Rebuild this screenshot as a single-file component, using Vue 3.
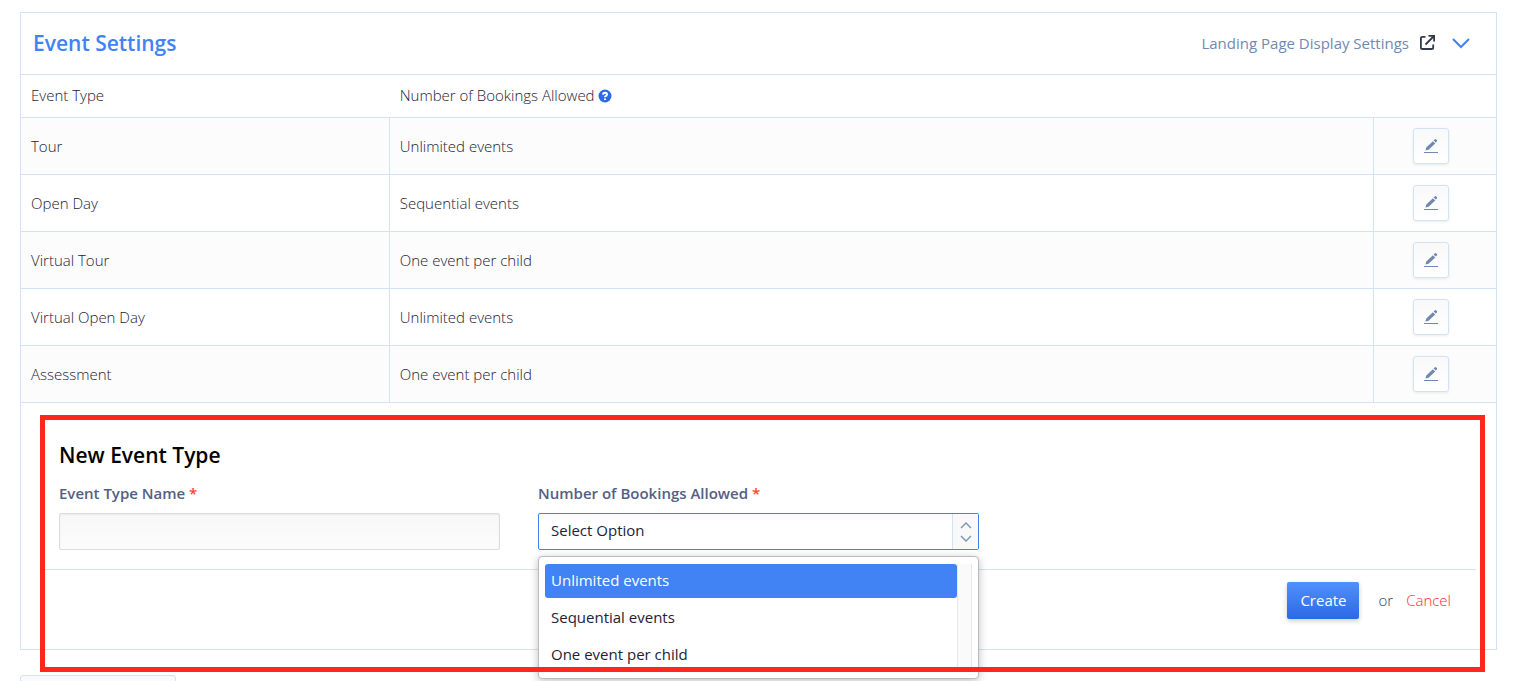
<script setup>
    import { ref } from 'vue'

    const eventTypes = ref([
        { id: 1, name: 'Tour', bookings: 'Unlimited events' },
        { id: 2, name: 'Open Day', bookings: 'Sequential events' },
        { id: 3, name: 'Virtual Tour', bookings: 'One event per child' },
        { id: 4, name: 'Virtual Open Day', bookings: 'Unlimited events' },
        { id: 5, name: 'Assessment', bookings: 'One event per child' },
    ])
    const bookingOptions = ['Unlimited events', 'Sequential events', 'One event per child']

    const typeName = ref('')
    const bookings = ref('')
    const activeOption = ref(0)
    const listOpen = ref(true)

    const pickOption = (option) => {
        bookings.value = option
        listOpen.value = false
    }

    const toggleList = () => {
        listOpen.value = !listOpen.value
    }

    const createType = () => {
        if (!typeName.value || !bookings.value) {
            return
        }
        eventTypes.value.push({
            id: eventTypes.value.length + 1,
            name: typeName.value,
            bookings: bookings.value,
        })
        resetForm()
    }

    const resetForm = () => {
        typeName.value = ''
        bookings.value = ''
    }
</script>

<template>
    <main class="page">
        <section class="panel">
            <header class="panel-header">
                <h2 class="panel-title">Event Settings</h2>
                <a class="landing-link" href="#">
                    Landing Page Display Settings
                    <svg class="icon-external" viewBox="0 0 15 15" aria-hidden="true">
                        <path d="M5.5 1.8H2.5Q0.9 1.8 0.9 3.4V12.4Q0.9 14 2.5 14H11.6Q13.2 14 13.2 12.4V9.5" />
                        <path d="M5.5 9.5L13.5 1.5M8.5 0.9H14.1V6.5" />
                    </svg>
                </a>
                <button class="collapse" type="button" aria-label="Collapse">
                    <svg viewBox="0 0 18 12" aria-hidden="true">
                        <path d="M1 2L9 10L17 2" />
                    </svg>
                </button>
            </header>

            <table class="types">
                <thead>
                    <tr>
                        <th class="col-name">Event Type</th>
                        <th>
                            Number of Bookings Allowed
                            <svg class="icon-help" viewBox="0 0 14 14" aria-hidden="true">
                                <circle cx="7" cy="7" r="6.5" />
                                <path d="M5 5.6Q5.1 3.7 7 3.7Q9 3.7 9 5.4Q9 6.4 7.9 6.9Q7 7.3 7 8.3" />
                                <path d="M7 9.6V11" />
                            </svg>
                        </th>
                        <th class="col-action"></th>
                    </tr>
                </thead>
                <tbody>
                    <tr v-for="type in eventTypes" :key="type.id">
                        <td>{{ type.name }}</td>
                        <td>{{ type.bookings }}</td>
                        <td class="col-action">
                            <button class="edit" type="button" :aria-label="'Edit ' + type.name">
                                <svg viewBox="0 0 14 16" aria-hidden="true">
                                    <path class="pencil" d="M1.4 12.6L2.3 9.4L8.9 3.2L11.2 5.4L4.6 11.7ZM9.6 2.5L10.9 1.3Q11.6 0.8 12.3 1.4L12.9 2Q13.5 2.7 12.9 3.4L11.8 4.6Z" />
                                    <path class="line" d="M0 14.5H14" />
                                </svg>
                            </button>
                        </td>
                    </tr>
                </tbody>
            </table>

            <form class="new-type" @submit.prevent="createType">
                <h3 class="form-title">New Event Type</h3>
                <div class="fields">
                    <div class="field">
                        <label for="type-name">Event Type Name <span class="required">*</span></label>
                        <input id="type-name" class="text-input" type="text" v-model="typeName" />
                    </div>
                    <div class="field">
                        <label for="bookings">Number of Bookings Allowed <span class="required">*</span></label>
                        <div class="select-box">
                            <select id="bookings" v-model="bookings" @mousedown.prevent="toggleList">
                                <option value="">Select Option</option>
                                <option v-for="option in bookingOptions" :key="option" :value="option">{{ option }}</option>
                            </select>
                            <span class="arrows">
                                <svg viewBox="0 0 12 20" aria-hidden="true">
                                    <path d="M1 6L6 1L11 6M1 14L6 19L11 14" />
                                </svg>
                            </span>
                            <div v-if="listOpen" class="menu">
                                <ul class="menu-list" role="listbox">
                                    <li v-for="(option, index) in bookingOptions" :key="option" class="menu-item"
                                        :class="{ active: index === activeOption }" role="option"
                                        @mouseenter="activeOption = index" @click="pickOption(option)">{{ option }}</li>
                                </ul>
                                <div class="menu-track"></div>
                            </div>
                        </div>
                    </div>
                </div>
                <div class="actions">
                    <button class="create" type="submit">Create</button>
                    <span class="or">or</span>
                    <a class="cancel" href="#" @click.prevent="resetForm">Cancel</a>
                </div>
                <div class="highlight"></div>
            </form>
        </section>
        <button class="next-button" type="button" aria-label="Add"></button>
    </main>
</template>

<style>
    body {
        background: #fff;
    }
</style>

<style scoped>
    .page {
        box-sizing: border-box;
        height: 100vh;
        overflow: hidden;
        padding: 12px 17px 0 20px;
        font-family: "Open Sans", "Noto Sans", sans-serif;
        font-size: 15px;
        line-height: 20px;
        color: #1d2236;
    }

    .page * {
        box-sizing: border-box;
    }

    button,
    input,
    select {
        font-family: inherit;
        font-size: 15px;
    }

    svg {
        fill: none;
    }

    .panel {
        border: 1px solid #d3e2f5;
    }

    .panel-header {
        display: flex;
        align-items: center;
        height: 62px;
        padding: 0 26px 2px 12px;
        border-bottom: 1px solid #d3e2f5;
    }

    .panel-title {
        flex: 1;
        margin: 0;
        font-size: 21px;
        font-weight: 600;
        line-height: 28px;
        color: #4183f4;
    }

    .landing-link {
        display: flex;
        align-items: center;
        gap: 11px;
        color: #7189b0;
        text-decoration: none;
    }

    .icon-external {
        width: 15px;
        height: 15px;
        stroke: #333a4d;
        stroke-width: 1.8;
    }

    .collapse {
        display: flex;
        margin-left: 17px;
        padding: 0;
        border: 0;
        background: none;
    }

    .collapse svg {
        width: 18px;
        height: 12px;
        stroke: #4183f4;
        stroke-width: 2;
    }

    .types {
        width: 100%;
        border-collapse: separate;
        border-spacing: 0;
        table-layout: fixed;
    }

    .types th,
    .types td {
        padding: 0 10px;
        border-bottom: 1px solid #d3e2f5;
        text-align: left;
        font-weight: 300;
    }

    .types th {
        height: 43px;
        padding-bottom: 3px;
    }

    .types td {
        height: 57px;
        border-right: 1px solid #d3e2f5;
    }

    .types td:last-child {
        border-right: 0;
    }

    .types tbody tr:nth-child(odd) {
        background: #fcfcfc;
    }

    .types .col-name {
        width: 25%;
    }

    .types .col-action {
        width: 122px;
        padding: 0 8px 0 0;
        text-align: center;
    }

    .icon-help {
        width: 14px;
        height: 14px;
        vertical-align: -2px;
        stroke: #fff;
        stroke-width: 2;
    }

    .icon-help circle {
        fill: #2c6ae8;
        stroke: none;
    }

    .edit {
        display: inline-flex;
        align-items: center;
        justify-content: center;
        width: 36px;
        height: 36px;
        padding: 0;
        border: 1px solid #d3e2f5;
        border-radius: 3px;
        background: linear-gradient(#f9f9f9, #fff);
        box-shadow: 0 1px 3px rgba(0, 0, 0, 0.08);
        vertical-align: middle;
    }

    .edit svg {
        width: 14px;
        height: 16px;
    }

    .pencil {
        fill: #7189b0;
    }

    .line {
        stroke: #7189b0;
    }

    .new-type {
        position: relative;
    }

    .form-title {
        margin: 0;
        padding: 38px 38px 14px;
        font-size: 21px;
        font-weight: 600;
        line-height: 28px;
        color: #000;
    }

    .fields {
        display: grid;
        grid-template-columns: repeat(3, 1fr);
        gap: 38px;
        margin: 0 20px;
        padding: 0 18px 19px;
        border-bottom: 1px solid #d3e2f5;
    }

    .field label {
        display: block;
        margin-bottom: 10px;
        font-weight: 600;
        color: #536083;
    }

    .required {
        color: #f44336;
    }

    .text-input {
        display: block;
        width: 100%;
        height: 37px;
        padding: 0 12px;
        border: 1px solid #dcdcdc;
        border-radius: 2px;
        outline: none;
        background: linear-gradient(#f7f7f7, #fcfcfc);
        box-shadow: inset 0 1px 2px rgba(0, 0, 0, 0.06);
    }

    .select-box {
        position: relative;
    }

    .select-box select {
        display: block;
        width: 100%;
        height: 37px;
        padding: 0 38px 3px 12px;
        appearance: none;
        border: 1px solid #4183f4;
        border-radius: 2px;
        outline: none;
        background: linear-gradient(#fafafa, #fff 8px);
        color: #1d2236;
    }

    .arrows {
        position: absolute;
        top: 1px;
        right: 1px;
        bottom: 1px;
        display: flex;
        align-items: center;
        justify-content: center;
        width: 26px;
        border-left: 1px solid #d3e2f5;
        background: #f9f9f9;
        pointer-events: none;
    }

    .arrows svg {
        width: 12px;
        height: 20px;
        stroke: #7b93b7;
        stroke-width: 1.4;
    }

    .menu {
        position: absolute;
        z-index: 1;
        top: 43px;
        left: 0;
        right: 0;
        display: flex;
        padding: 7px 6px 6px;
        border: 1px solid #bbb;
        border-radius: 4px;
        background: #fff;
        box-shadow: 0 2px 8px rgba(0, 0, 0, 0.25);
    }

    .menu-list {
        display: grid;
        flex: 1;
        gap: 3px;
        margin: 0;
        padding: 0;
        list-style: none;
    }

    .menu-item {
        padding: 6px 6px 8px;
        border-radius: 3px;
    }

    .menu-item.active {
        background: #4183f4;
        color: #fff;
    }

    .menu-track {
        width: 15px;
        border: 1px solid #e8e8e8;
        border-width: 0 1px;
        background: #fafafa;
    }

    .actions {
        display: flex;
        align-items: center;
        justify-content: flex-end;
        padding: 12px 45px 30px;
    }

    .create {
        height: 37px;
        padding: 0 13px 1px;
        border: 0;
        border-radius: 2px;
        background: linear-gradient(#5190fc, #2c69e5);
        box-shadow: 0 2px 5px rgba(0, 0, 0, 0.2);
        font-weight: 500;
        color: #fff;
    }

    .or {
        margin: 0 13px 0 19px;
        padding-bottom: 2px;
        font-weight: 300;
        color: #2f3f6b;
    }

    .cancel {
        padding-bottom: 2px;
        font-weight: 300;
        color: #ff2936;
        text-decoration: none;
    }

    /* frame drawn over the form and its open menu */
    .highlight {
        position: absolute;
        z-index: 2;
        top: 12px;
        right: 11px;
        bottom: -23px;
        left: 19px;
        border: 5px solid #ff261c;
        pointer-events: none;
    }

    .next-button {
        display: block;
        width: 156px;
        height: 37px;
        margin-top: 25px;
        border: 1px solid #d3e2f5;
        border-radius: 3px;
        background: linear-gradient(#f9f9f9, #fff);
    }
</style>
